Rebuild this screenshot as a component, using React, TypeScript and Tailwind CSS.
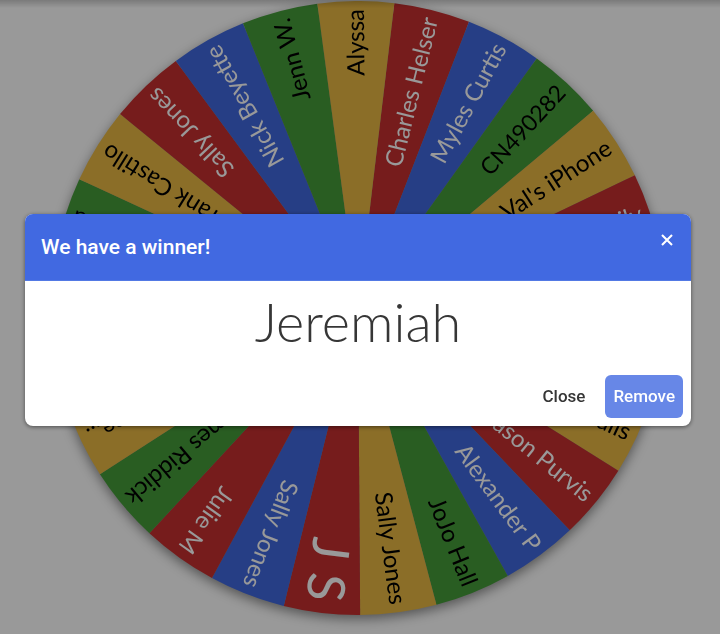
const SLICE_DEGREES = 14.4;
const START_DEGREES = 6.8;
const RADIUS = 307;

const RED = "#c52f2f";
const BLUE = "#4068de";
const GREEN = "#459b3a";
const GOLD = "#e8b743";

type Entry = { name: string; color: string; size?: number };

const entries: Entry[] = [
  { name: "Charles Helser", color: RED },
  { name: "Myles Curtis", color: BLUE },
  { name: "CN490282", color: GREEN, size: 23 },
  { name: "Val's iPhone", color: GOLD },
  { name: "Emily", color: RED },
  { name: "", color: BLUE },
  { name: "", color: GREEN },
  { name: "Dalis", color: GOLD },
  { name: "Jason Purvis", color: RED },
  { name: "Alexander P", color: BLUE },
  { name: "JoJo Hall", color: GREEN },
  { name: "Sally Jones", color: GOLD },
  { name: "J S", color: RED, size: 52 },
  { name: "Sally Jones", color: BLUE },
  { name: "Julie M", color: RED },
  { name: "James Riddick", color: GREEN },
  { name: "Rose...", color: GOLD },
  { name: "", color: BLUE },
  { name: "", color: RED },
  { name: "Paula", color: GREEN },
  { name: "Frank Castillo", color: GOLD },
  { name: "Sally Jones", color: RED },
  { name: "Nick Beyette", color: BLUE },
  { name: "Jenn W.", color: GREEN },
  { name: "Alyssa", color: GOLD },
];

function pointOnRim(degrees: number) {
  const angle = (degrees * Math.PI) / 180;
  return `${RADIUS * Math.sin(angle)} ${-RADIUS * Math.cos(angle)}`;
}

function Slice({ entry, index }: { entry: Entry; index: number }) {
  const from = START_DEGREES + index * SLICE_DEGREES;
  const to = from + SLICE_DEGREES;
  const size = entry.size ?? 24;
  const light = entry.color === RED || entry.color === BLUE;

  return (
    <g>
      <path
        d={`M0 0 L${pointOnRim(from)} A${RADIUS} ${RADIUS} 0 0 1 ${pointOnRim(to)} Z`}
        fill={entry.color}
      />
      <text
        transform={`rotate(${(from + to) / 2 - 90})`}
        x={302 - Math.round(size / 8)}
        y={Math.round(size / 3)}
        fontSize={size}
        textAnchor="end"
        fill={light ? "#ffffff" : "#000000"}
      >
        {entry.name}
      </text>
    </g>
  );
}

function Wheel() {
  return (
    <svg
      viewBox="-308 -308 616 616"
      className="block w-full overflow-visible font-[Lato,sans-serif] drop-shadow-[0_4px_6px_rgba(0,0,0,0.45)]"
      role="img"
      aria-label="Wheel of names"
    >
      {entries.map((entry, index) => (
        <Slice key={index} entry={entry} index={index} />
      ))}
    </svg>
  );
}

function WinnerDialog() {
  return (
    <div
      role="dialog"
      aria-modal="true"
      aria-labelledby="winner-title"
      className="w-full overflow-hidden rounded-lg bg-white text-[#363636] shadow-[0_1px_4px_rgba(0,0,0,0.5)]"
    >
      <header className="flex items-start justify-between border-b border-[#5279e4] bg-[#4169e1] pr-[15px] pl-4 text-white">
        <h1 id="winner-title" className="py-[17px] text-[21px] leading-8 font-medium">
          We have a winner!
        </h1>
        <button type="button" aria-label="Close dialog" className="mt-[17px] p-[3px]">
          <svg
            viewBox="0 0 12 12"
            className="size-3"
            fill="none"
            stroke="currentColor"
            strokeWidth="2.1"
          >
            <path d="M1 1 L11 11 M11 1 L1 11" />
          </svg>
        </button>
      </header>
      <p className="pt-2 pb-4 text-center font-[Lato,sans-serif] text-[54px] leading-[66px] font-light">
        Jeremiah
      </p>
      <footer className="flex justify-end gap-3 px-2 pt-1 pb-2 text-[17px] font-medium">
        <button type="button" className="h-[43px] rounded-md px-2">
          Close
        </button>
        <button type="button" className="h-[43px] rounded-md bg-[#6787e7] px-2 text-white">
          Remove
        </button>
      </footer>
    </div>
  );
}

export default function App() {
  return (
    <main className="relative h-screen overflow-hidden bg-white pr-[54px] pl-[50px] font-[Roboto,sans-serif]">
      <Wheel />
      <div className="absolute inset-x-0 top-0 h-2 bg-gradient-to-b from-black/20 to-transparent" />
      <div className="fixed inset-0 flex items-center bg-black/40 pt-[6px] pr-[29px] pl-[25px]">
        <WinnerDialog />
      </div>
    </main>
  );
}
